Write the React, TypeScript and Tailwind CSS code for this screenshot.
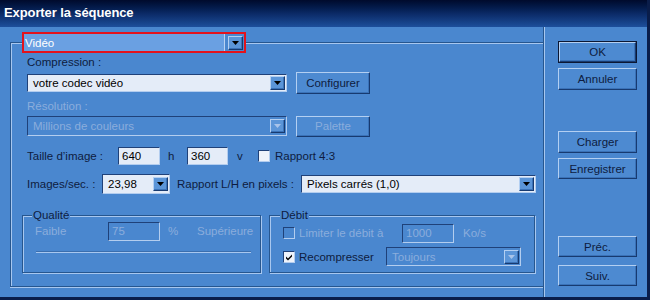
import React from "react";

const FONT = "font-['Liberation_Sans',Arial,sans-serif]";

// couleurs du thème
const SUNKEN = "border border-[#1f4179] border-r-[#b3cdef] border-b-[#b3cdef]";
const RAISED = "border border-[#b3cff2] border-r-[#173a70] border-b-[#173a70] shadow-[inset_-1px_-1px_0_#3a72b8]";

function Arrow({ disabled }: { disabled?: boolean }) {
  return (
    <div
      className={`w-[15px] h-[14px] mr-px shrink-0 flex items-center justify-center bg-[#5b95d8] ${RAISED}`}
    >
      <svg width="7" height="4" viewBox="0 0 7 4">
        <path d="M0 0h7L3.5 4z" fill={disabled ? "#a9c4ea" : "#000"} />
      </svg>
    </div>
  );
}

function Combo({ text, className, disabled }: { text: string; className: string; disabled?: boolean }) {
  return (
    <div
      className={`flex items-center shrink-0 ${SUNKEN} ${
        disabled ? "bg-[#4a87cf] text-[#8aaddc]" : "bg-[#e4ecf8] text-black"
      } ${className}`}
    >
      <span className="flex-1 pl-[5px] whitespace-nowrap overflow-hidden">{text}</span>
      <Arrow disabled={disabled} />
    </div>
  );
}

function Field({ text, className, disabled }: { text: string; className: string; disabled?: boolean }) {
  return (
    <div
      className={`flex items-center shrink-0 pl-[3px] ${SUNKEN} ${
        disabled ? "bg-[#4a87cf] text-[#8aaddc]" : "bg-[#e4ecf8] text-black"
      } ${className}`}
    >
      {text}
    </div>
  );
}

function Check({ checked, disabled }: { checked?: boolean; disabled?: boolean }) {
  return (
    <div
      className={`w-[12px] h-[12px] shrink-0 flex items-center justify-center ${SUNKEN} ${
        disabled ? "bg-[#4a87cf]" : "bg-[#eef3fb]"
      }`}
    >
      {checked && (
        <svg width="8" height="8" viewBox="0 0 8 8">
          <path d="M1 3.5l2 2L7 1.5v2L3 7.5 1 5.5z" fill="#000" />
        </svg>
      )}
    </div>
  );
}

function Btn({
  children,
  className,
  disabled,
  def,
}: {
  children: React.ReactNode;
  className: string;
  disabled?: boolean;
  def?: boolean;
}) {
  const inner = (
    <div
      className={`flex items-center justify-center w-full h-full bg-[#4d8ad1] ${RAISED} ${
        disabled ? "text-[#8aaddc]" : "text-[#0e1c40]"
      }`}
    >
      {children}
    </div>
  );
  if (def) return <div className={`border border-[#0b1733] ${className}`}>{inner}</div>;
  return <div className={className}>{inner}</div>;
}

function Legend({ children, className }: { children: React.ReactNode; className: string }) {
  return (
    <span className={`absolute top-[-8px] h-[14px] leading-[14px] px-[1px] bg-[#4a87cf] ${className}`}>
      {children}
    </span>
  );
}

export default function App() {
  return (
    <div
      className={`w-[650px] h-[300px] flex flex-col bg-[#4a87cf] text-[11.5px] leading-[14px] text-[#0e1c40] ${FONT} border-r-[3px] border-b-[3px] border-[#0a1d4a] overflow-hidden`}
    >
      {/* barre de titre */}
      <div className="h-[27px] shrink-0 bg-gradient-to-b from-[#000a2c] via-[#0b2a66] to-[#1d4f9c] flex items-center pl-[4px] pb-[1px] text-white font-bold text-[13px] tracking-[-0.1px]">
        Exporter la séquence
      </div>

      <div className="flex flex-1">
        {/* partie gauche */}
        <div className="w-[544px] shrink-0 border-r border-r-[#26568f] pl-[10px] pt-[15px]">
          <div className="relative h-[245px] border border-r-0 border-[#26568f] shadow-[inset_1px_1px_0_#a8c7ef,0_1px_0_#a8c7ef] pl-[16px]">
            {/* menu Vidéo */}
            <div className="absolute left-[11px] top-[-11px] w-[224px] h-[21px] border-2 border-[#e3121c] bg-[#4a87cf] flex items-center">
              <div className="flex-1 h-full bg-[#6aa0e2] text-white pl-[1px] flex items-center border-r border-r-[#b9d2f2]">
                Vidéo
              </div>
              <div className="w-[3px]" />
              <Arrow />
            </div>

            <div className="mt-[12px] h-[14px]">Compression :</div>
            <div className="mt-[3px] h-[22px] flex items-center">
              <Combo text="votre codec vidéo" className="w-[260px] h-[18px]" />
              <Btn className="ml-[9px] w-[74px] h-[22px]">Configurer</Btn>
            </div>

            <div className="mt-[5px] h-[14px] text-[#8aaddc]">Résolution :</div>
            <div className="mt-[2px] h-[22px] flex items-center">
              <Combo text="Millions de couleurs" className="w-[260px] h-[20px]" disabled />
              <Btn className="ml-[9px] w-[74px] h-[21px]" disabled>
                Palette
              </Btn>
            </div>

            <div className="mt-[10px] h-[18px] flex items-center">
              <span className="w-[91px] shrink-0">Taille d’image :</span>
              <Field text="640" className="w-[42px] h-[18px]" />
              <span className="w-[27px] shrink-0 pl-[8px]">h</span>
              <Field text="360" className="w-[41px] h-[18px]" />
              <span className="w-[30px] shrink-0 pl-[9px]">v</span>
              <Check />
              <span className="ml-[5px]">Rapport 4:3</span>
            </div>

            <div className="mt-[9px] h-[20px] flex items-center">
              <span className="w-[75px] shrink-0">Images/sec. :</span>
              <Combo text="23,98" className="w-[68px] h-[20px]" />
              <span className="ml-[7px] w-[124px] shrink-0">Rapport L/H en pixels :</span>
              <Combo text="Pixels carrés (1,0)" className="w-[235px] h-[18px]" />
            </div>

            <div className="mt-[21px] -ml-[5px] flex">
              {/* Qualité */}
              <div className="relative w-[239px] h-[58px] border border-[#26568f] shadow-[inset_1px_1px_0_#a8c7ef,1px_1px_0_#a8c7ef] text-[#8aaddc]">
                <Legend className="left-[9px] text-[#0e1c40]">Qualité</Legend>
                <div className="mt-[5px] h-[20px] flex items-center pl-[12px]">
                  <span className="w-[73px] shrink-0">Faible</span>
                  <Field text="75" className="w-[52px] h-[19px]" disabled />
                  <span className="w-[37px] shrink-0 pl-[8px]">%</span>
                  <span>Supérieure</span>
                </div>
                <div className="mt-[10px] ml-[13px] w-[215px] h-[2px] border-t border-t-[#3a6eae] border-b border-b-[#a8c7ef]" />
              </div>

              {/* Débit */}
              <div className="relative ml-[8px] w-[266px] h-[58px] border border-[#26568f] shadow-[inset_1px_1px_0_#a8c7ef,1px_1px_0_#a8c7ef]">
                <Legend className="left-[10px]">Débit</Legend>
                <div className="mt-[7px] h-[20px] flex items-center pl-[13px] text-[#8aaddc]">
                  <Check disabled />
                  <span className="ml-[4px] w-[103px] shrink-0">Limiter le débit à</span>
                  <Field text="1000" className="w-[52px] h-[19px]" disabled />
                  <span className="ml-[9px]">Ko/s</span>
                </div>
                <div className="mt-[4px] h-[19px] flex items-center pl-[13px]">
                  <Check checked />
                  <span className="ml-[4px] w-[87px] shrink-0">Recompresser</span>
                  <Combo text="Toujours" className="w-[135px] h-[19px]" disabled />
                </div>
              </div>
            </div>
          </div>
        </div>
        <div className="w-px bg-[#a8c7ef]" />

        {/* boutons */}
        <div className="flex-1 pl-[13px] flex flex-col">
          <Btn def className="mt-[14px] w-[79px] h-[22px]">OK</Btn>
          <Btn className="mt-[5px] w-[79px] h-[22px]">Annuler</Btn>
          <Btn className="mt-[41px] w-[79px] h-[22px]">Charger</Btn>
          <Btn className="mt-[5px] w-[79px] h-[21px]">Enregistrer</Btn>
          <Btn className="mt-[57px] w-[79px] h-[21px]">Préc.</Btn>
          <Btn className="mt-[8px] w-[79px] h-[21px]">Suiv.</Btn>
        </div>
      </div>
    </div>
  );
}
